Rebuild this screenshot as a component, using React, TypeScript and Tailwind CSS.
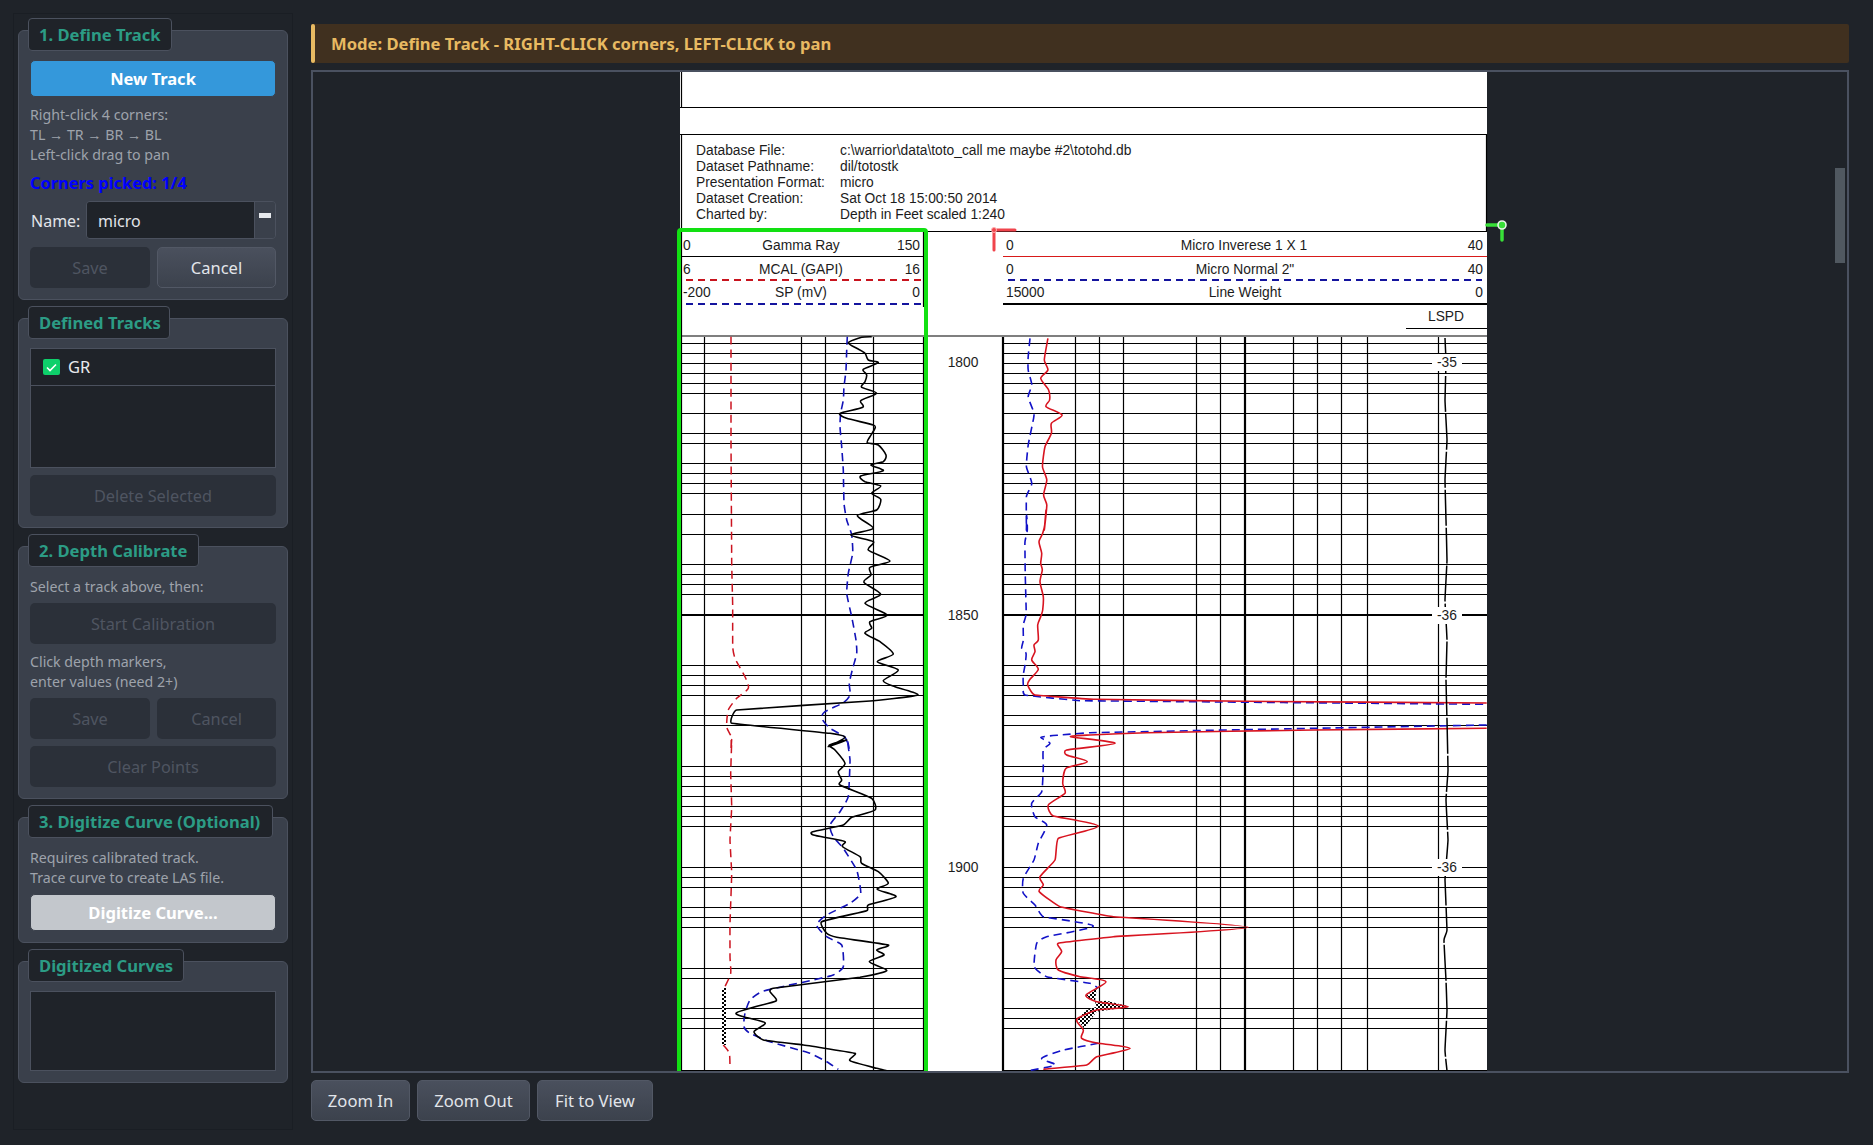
import React from "react";

const UI = "font-['Noto_Sans','Open_Sans',sans-serif]";

const pts = (ox: number, oy: number, sx: number, sy: number, a: number[][]) =>
  a.map(([x, y]) => `${(ox + x / sx).toFixed(1)},${(oy + y / sy).toFixed(1)}`).join(" ");

const Z6 = (a: number[][]) => pts(670, 330, 3, 3, a);
const Z7 = (a: number[][]) => pts(670, 740, 3, 3, a);
const Z5 = (a: number[][]) => pts(980, 200, 2.8, 3, a);
const Z8 = (a: number[][]) => pts(980, 660, 3, 3, a);
const Z11 = (a: number[][]) => pts(990, 510, 3, 3, a);

// Catmull-Rom through the traced points, with short handles so spikes do not overshoot
const clamp = (dx: number, dy: number, max: number) => {
  const l = Math.hypot(dx, dy);
  return l > max ? [(dx / l) * max, (dy / l) * max] : [dx, dy];
};
const smooth = (s: string) => {
  const p = s.trim().split(/\s+/).map((q) => q.split(",").map(Number));
  let d = `M${p[0][0]} ${p[0][1]}`;
  const k = 1 / 8;
  for (let i = 0; i < p.length - 1; i++) {
    const a = p[Math.max(i - 1, 0)], b = p[i], c = p[i + 1], e = p[Math.min(i + 2, p.length - 1)];
    const [d1x, d1y] = clamp((c[0] - a[0]) * k, (c[1] - a[1]) * k, 3);
    const [d2x, d2y] = clamp((e[0] - b[0]) * k, (e[1] - b[1]) * k, 3);
    d += `C${(b[0] + d1x).toFixed(1)} ${(b[1] + d1y).toFixed(1)} ${(c[0] - d2x).toFixed(1)} ${(c[1] - d2y).toFixed(1)} ${c[0]} ${c[1]}`;
  }
  return d;
};

const HL = [343,353,363,373,383,393,413,433,443,463,473,483,493,514,534,564,574,584,594,665,675,685,695,715,725,766,776,786,796,806,816,826,867,877,887,907,917,927,968,978,1008,1018,1028,1070];
const V1 = [704, 801, 825, 873, 923];
const V2 = [1075, 1099, 1123, 1196, 1220, 1293, 1317, 1341, 1367, 1438];

const grBlack = Z6([[605,20],[575,22],[535,38],[560,55],[585,70],[595,90],[625,98],[580,118],[590,135],[585,155],[575,172],[620,190],[572,212],[578,232],[510,250],[530,265],[610,285],[615,295],[600,320],[592,338],[625,345],[648,375],[640,395],[602,405],[640,422],[572,438],[585,455],[632,468],[605,490],[632,508],[620,540],[562,557],[610,595],[542,615],[610,635],[595,660],[660,693],[600,712],[603,735],[582,757],[632,793],[585,820],[652,855],[600,875],[605,895],[585,910],[630,935],[670,972],[622,995],[685,1020],[640,1052],[675,1070],[743,1095],[600,1113],[200,1140],[185,1180],[480,1210],[525,1222],[475,1250]]) + " " +
  Z7([[530,0],[478,15],[495,30],[525,70],[505,95],[515,120],[510,135],[605,175],[615,210],[545,232],[520,255],[428,275],[430,285],[480,295],[525,305],[518,320],[570,350],[575,370],[625,395],[655,430],[622,448],[678,470],[595,495],[590,512],[455,545],[470,580],[500,592],[655,615],[620,630],[642,645],[598,665],[650,692],[570,712],[310,745],[300,755],[318,783],[198,820],[285,848],[252,875],[280,900],[400,915],[555,940],[540,962],[620,985],[650,992]]);

const grBlue = Z6([[532,20],[530,60],[528,120],[522,170],[520,210],[512,250],[510,290],[515,350],[520,420],[522,520],[530,570],[545,615],[548,670],[535,730],[530,790],[545,860],[558,930],[560,970],[548,1015],[538,1060],[540,1095],[520,1118],[465,1145],[455,1165],[480,1195],[525,1222],[537,1255]]) + " " +
  Z7([[532,0],[540,60],[535,170],[510,215],[480,255],[490,290],[520,325],[560,390],[572,460],[540,490],[470,525],[440,555],[470,590],[515,615],[520,680],[490,705],[420,722],[345,738],[275,755],[240,780],[225,820],[222,860],[240,880],[300,905],[420,940],[470,965],[505,988]]);

const grRed1 = Z6([[183,20],[183,200],[183,330],[185,700],[188,830],[188,950],[195,985],[225,1040],[235,1075],[200,1105],[175,1140],[170,1190],[183,1220],[183,1260]]) + " " +
  Z7([[185,0],[182,100],[185,200],[180,300],[185,400],[180,550],[180,650],[182,700],[165,740]]);
const grRed2 = Z7([[160,915],[178,940],[180,985]]);

const miRed = Z5([[190,415],[180,480],[190,510],[170,535],[192,570],[195,600],[185,620],[230,645],[200,670],[200,700],[182,740],[175,800],[187,840],[178,885],[187,915],[180,990]]) + " " +
  Z11([[168,0],[165,40],[158,70],[147,95],[155,130],[152,160],[157,180],[150,215],[160,260],[158,300],[152,320],[143,345],[145,390],[132,405],[135,425],[125,450],[145,478],[120,508]]) + " " +
  Z8([[143,75],[165,105],[345,118],[800,124],[1520,129]]);
const miRed2 = Z8([[1520,205],[1000,210],[500,218],[330,225],[272,230],[405,250],[260,270],[260,285],[322,305],[258,325],[248,370],[255,400],[205,435],[220,468],[355,498],[235,535],[225,600],[180,650],[190,675],[178,695],[240,740],[400,770],[805,802],[400,830],[235,850],[245,875],[228,900],[235,930],[300,950],[378,965],[318,1005],[350,1025],[445,1040],[350,1050],[290,1078],[310,1110],[305,1135],[355,1150],[450,1165],[350,1190],[320,1215],[190,1228]]);

const miBlue = Z5([[140,415],[135,470],[135,510],[145,555],[135,590],[150,635],[150,655],[135,735],[130,800],[145,850],[130,890],[130,990]]) + " " +
  Z11([[110,15],[112,60],[105,95],[105,130],[106,200],[108,280],[108,315],[100,345],[100,390],[95,415],[108,430],[106,460],[100,495]]) + " " +
  Z8([[130,75],[135,105],[300,122],[1520,133]]);
const miBlue2 = Z8([[1520,195],[1000,205],[330,218],[240,225],[183,232],[210,250],[190,270],[190,320],[185,395],[155,430],[165,470],[200,495],[175,550],[162,600],[130,655],[130,700],[165,735],[190,770],[340,798],[200,830],[170,850],[163,920],[200,950],[330,970],[355,985]]);
const miBlue3 = Z8([[355,1150],[250,1170],[185,1195],[225,1215],[145,1232]]);
const blob = Z8([[350,985],[318,1008],[345,1025],[380,1022],[450,1040],[350,1055],[312,1105],[290,1078],[320,1050],[350,1040],[345,1025]]);

const lspd = "1445,338 1446,362 1445,400 1447,440 1445,480 1446,520 1447,560 1445,600 1447,640 1446,680 1447,720 1448,770 1446,800 1448,840 1445,880 1447,930 1444,940 1446,980 1447,1010 1445,1050 1447,1071";

function Doc() {
  const t = { fontFamily: "'Liberation Sans', sans-serif", fontSize: 13.8, fill: "#1c1c1c" };
  return (
    <svg viewBox="680 72 807 999" className="block w-[807px] h-[999px] overflow-visible shrink-0">
      <defs>
        <pattern id="chk" width="4" height="4" patternUnits="userSpaceOnUse">
          <rect width="4" height="4" fill="#fff" />
          <rect width="2" height="2" fill="#000" />
          <rect x="2" y="2" width="2" height="2" fill="#000" />
        </pattern>
      </defs>
      <rect x="680" y="72" width="807" height="999" fill="#fff" />
      <g stroke="#000" strokeWidth="1.2" fill="none">
        <path d="M681.5 72V107M680 107.5H1487M680 134.5H1487M681.5 134V1071M1486.5 134V231M681 231.5H1487M681 336H1487" />
        <path d="M681 256.5H923M923.5 232V307" />
        {HL.map((y) => (
          <path key={y} d={`M681 ${y + 0.5}H923M1003 ${y + 0.5}H1487`} />
        ))}
        {V1.map((x) => (
          <path key={x} d={`M${x + 0.5} 337V1071`} />
        ))}
        {V2.map((x) => (
          <path key={x} d={`M${x + 0.5} 337V1071`} />
        ))}
        <path d="M681 615H923M1003 615H1487" strokeWidth="2.2" />
        <path d="M1003 337V1071M1245 337V1071M1003 304H1487" strokeWidth="2.2" />
        <path d="M1406 328.5H1487" />
      </g>
      <path d="M1003 256.5H1487" stroke="#d81a1a" strokeWidth="1.2" />
      <path d="M686 280H921" stroke="#c8141e" strokeWidth="2" strokeDasharray="7 5" />
      <path d="M686 304H921" stroke="#14149e" strokeWidth="2" strokeDasharray="7 5" />
      <path d="M1008 280H1482" stroke="#14149e" strokeWidth="2" strokeDasharray="7 5" />

      <path d={smooth(grRed1)} fill="none" stroke="#cc1420" strokeWidth="1.5" strokeDasharray="8 5" />
      <path d={smooth(grRed2)} fill="none" stroke="#cc1420" strokeWidth="1.5" strokeDasharray="8 5" />
      <rect x="722" y="988" width="4" height="57" fill="url(#chk)" />
      <path d={smooth(grBlue)} fill="none" stroke="#1212b8" strokeWidth="1.6" strokeDasharray="8 5" />
      <path d={smooth(grBlack)} fill="none" stroke="#000" strokeWidth="1.6" strokeLinejoin="round" />

      <path d={smooth(miBlue)} fill="none" stroke="#1212c8" strokeWidth="1.6" strokeDasharray="8 5" />
      <path d={smooth(miBlue2)} fill="none" stroke="#1212c8" strokeWidth="1.6" strokeDasharray="8 5" />
      <path d={smooth(miBlue3)} fill="none" stroke="#1212c8" strokeWidth="1.6" strokeDasharray="8 5" />
      <polygon points={blob} fill="url(#chk)" />
      <path d={smooth(miRed)} fill="none" stroke="#d81420" strokeWidth="1.6" strokeLinejoin="round" />
      <path d={smooth(miRed2)} fill="none" stroke="#d81420" strokeWidth="1.6" strokeLinejoin="round" />
      <path d={smooth(lspd)} fill="none" stroke="#000" strokeWidth="1.5" strokeDasharray="36 2" />

      <rect x="1432" y="354" width="30" height="17" fill="#fff" />
      <rect x="1432" y="607" width="30" height="17" fill="#fff" />
      <rect x="1432" y="859" width="30" height="17" fill="#fff" />

      <g style={t}>
        {[
          ["Database File:", "c:\\warrior\\data\\toto_call me maybe #2\\totohd.db", 155],
          ["Dataset Pathname:", "dil/totostk", 171],
          ["Presentation Format:", "micro", 187],
          ["Dataset Creation:", "Sat Oct 18 15:00:50 2014", 202.5],
          ["Charted by:", "Depth in Feet scaled 1:240", 218.5],
        ].map(([a, b, y]) => (
          <g key={a as string}>
            <text x="696" y={y as number}>{a}</text>
            <text x="840" y={y as number}>{b}</text>
          </g>
        ))}
        <text x="683" y="250">0</text>
        <text x="801" y="250" textAnchor="middle">Gamma Ray</text>
        <text x="920" y="250" textAnchor="end">150</text>
        <text x="683" y="274">6</text>
        <text x="801" y="274" textAnchor="middle">MCAL (GAPI)</text>
        <text x="920" y="274" textAnchor="end">16</text>
        <text x="683" y="297">-200</text>
        <text x="801" y="297" textAnchor="middle">SP (mV)</text>
        <text x="920" y="297" textAnchor="end">0</text>

        <text x="1006" y="250">0</text>
        <text x="1244" y="250" textAnchor="middle">Micro Inverese 1 X 1</text>
        <text x="1483" y="250" textAnchor="end">40</text>
        <text x="1006" y="274">0</text>
        <text x="1245" y="274" textAnchor="middle">Micro Normal 2"</text>
        <text x="1483" y="274" textAnchor="end">40</text>
        <text x="1006" y="297">15000</text>
        <text x="1245" y="297" textAnchor="middle">Line Weight</text>
        <text x="1483" y="297" textAnchor="end">0</text>
        <text x="1446" y="320.5" textAnchor="middle">LSPD</text>

        <text x="963" y="367" textAnchor="middle">1800</text>
        <text x="963" y="620" textAnchor="middle">1850</text>
        <text x="963" y="872" textAnchor="middle">1900</text>
        <text x="1447" y="367" textAnchor="middle">-35</text>
        <text x="1447" y="620" textAnchor="middle">-36</text>
        <text x="1447" y="872" textAnchor="middle">-36</text>
      </g>

      <rect x="679" y="230" width="247" height="860" rx="2" fill="none" stroke="#12e012" strokeWidth="4" />

      <g fill="none" stroke="#f0444c" strokeWidth="3" strokeLinecap="round">
        <path d="M994 232V250M997 230H1015" />
      </g>
      <circle cx="994" cy="230" r="2.5" fill="#f0444c" stroke="#ffb0b0" strokeWidth="1" />
      <g fill="none" stroke="#38e038" strokeWidth="3.5" strokeLinecap="round">
        <path d="M1487 225H1502V240" />
      </g>
      <circle cx="1502" cy="225" r="4" fill="#38e038" stroke="#e8f4e8" strokeWidth="1.6" />
    </svg>
  );
}

function Group({ title, titleW, className, children }: { title: string; titleW: string; className: string; children: React.ReactNode }) {
  return (
    <section className={`relative border border-[#4b515e] bg-[#3a404b] rounded-[6px] px-[11px] ${className}`}>
      <h2 className={`absolute left-[9px] top-[-13px] h-[33px] ${titleW} bg-[#1f2329] border border-[#4b515e] rounded-[4px] flex items-center pl-[10px] pt-[2px] text-[16.6px] leading-none font-bold text-[#2c9c85] whitespace-nowrap`}>
        {title}
      </h2>
      {children}
    </section>
  );
}

function Disabled({ children, className = "" }: { children: React.ReactNode; className?: string }) {
  return (
    <button className={`h-[41px] pt-[2px] rounded-[5px] bg-[#2b3039] text-[#4f5561] text-[16.3px] flex items-center justify-center ${className}`}>
      {children}
    </button>
  );
}

function Hint({ children, className = "" }: { children: React.ReactNode; className?: string }) {
  return <p className={`text-[14.2px] leading-[20px] text-[#9ea3ab] ${className}`}>{children}</p>;
}

function ZoomBtn({ children, w }: { children: React.ReactNode; w: string }) {
  return (
    <button className={`h-[41px] pt-[2px] ${w} rounded-[5px] border border-[#525865] bg-linear-to-b from-[#4a505d] to-[#3c424d] text-[#e2e5ea] text-[16.6px] flex items-center justify-center`}>
      {children}
    </button>
  );
}

export default function App() {
  return (
    <div className={`${UI} h-[1145px] w-[1873px] overflow-hidden bg-[#1f2329] flex`}>
      <aside className="ml-[13px] mt-[13px] h-[1117px] w-[280px] shrink-0 border border-[#1a1e24] pl-[4px] pr-[4px] pt-[16px] flex flex-col">
        <Group title="1. Define Track" titleW="w-[144px]" className="h-[270px] shrink-0 pt-[29px] flex flex-col">
          <button className="h-[37px] pt-[2px] shrink-0 border border-[#3a404b] rounded-[5px] bg-[#3498db] text-white font-bold text-[16.5px]">New Track</button>
          <Hint className="mt-[8px]">
            Right-click 4 corners:
            <br />
            TL → TR → BR → BL
            <br />
            Left-click drag to pan
          </Hint>
          <p className="mt-[8px] text-[16.4px] leading-[20px] font-bold text-[#0000ff]">Corners picked: 1/4</p>
          <div className="mt-[8px] h-[38px] flex items-center">
            <span className="w-[56px] text-[16px] text-[#e2e5ea] pl-[1px] pt-[1px]">Name:</span>
            <div className="flex-1 h-full flex border border-[#4b515e] rounded-[4px] overflow-hidden">
              <input readOnly value="micro" className="w-[167px] bg-[#1f2329] pl-[11px] pt-[2px] text-[16px] text-[#e2e5ea] outline-none" />
              <span className="flex-1 bg-[#3a404b] border-l border-[#4b515e] pt-[11px] px-[4px]">
                <span className="block h-[5px] bg-[#e6e8ec]" />
              </span>
            </div>
          </div>
          <div className="mt-[8px] flex gap-[7px]">
            <Disabled className="w-[120px]">Save</Disabled>
            <button className="flex-1 h-[41px] pt-[2px] rounded-[5px] border border-[#525865] bg-linear-to-b from-[#4a505d] to-[#3c424d] text-[#e2e5ea] text-[16.5px]">Cancel</button>
          </div>
        </Group>

        <Group title="Defined Tracks" titleW="w-[142px]" className="mt-[18px] h-[210px] shrink-0 pt-[29px] flex flex-col">
          <div className="h-[120px] border border-[#4b515e] bg-[#1f2329]">
            <div className="h-[37px] border-b border-[#4b515e] flex items-center pl-[12px]">
              <span className="w-[17px] h-[16px] rounded-[2px] bg-[#0ed06b] flex items-center justify-center">
                <svg width="11" height="9" viewBox="0 0 11 9" fill="none"><path d="M1 4.5L4 7.5L10 1.5" stroke="#fff" strokeWidth="1.6" /></svg>
              </span>
              <span className="ml-[8px] text-[16.5px] text-[#e8eaee]">GR</span>
            </div>
          </div>
          <Disabled className="mt-[7px]">Delete Selected</Disabled>
        </Group>

        <Group title="2. Depth Calibrate" titleW="w-[171px]" className="mt-[18px] h-[253px] shrink-0 pt-[30px] flex flex-col">
          <Hint>Select a track above, then:</Hint>
          <Disabled className="mt-[6px]">Start Calibration</Disabled>
          <Hint className="mt-[8px]">
            Click depth markers,
            <br />
            enter values (need 2+)
          </Hint>
          <div className="mt-[6px] flex gap-[7px]">
            <Disabled className="w-[120px]">Save</Disabled>
            <Disabled className="flex-1">Cancel</Disabled>
          </div>
          <Disabled className="mt-[7px]">Clear Points</Disabled>
        </Group>

        <Group title="3. Digitize Curve (Optional)" titleW="w-[245px]" className="mt-[18px] h-[126px] shrink-0 pt-[30px] flex flex-col">
          <Hint>
            Requires calibrated track.
            <br />
            Trace curve to create LAS file.
          </Hint>
          <button className="mt-[6px] h-[37px] pt-[2px] shrink-0 border border-[#3a404b] rounded-[5px] bg-[#c3c7cc] text-white font-bold text-[16.6px]">Digitize Curve...</button>
        </Group>

        <Group title="Digitized Curves" titleW="w-[156px]" className="mt-[18px] h-[122px] shrink-0 pt-[29px]">
          <div className="h-[80px] border border-[#4b515e] bg-[#1f2329]" />
        </Group>
      </aside>

      <main className="ml-[18px] mt-[24px] w-[1538px] shrink-0 flex flex-col">
        <div className="h-[39px] pt-[2px] shrink-0 relative bg-[#40301f] rounded-[2px] flex items-center pl-[20px]">
          <span className="absolute left-0 top-0 bottom-0 w-[4px] rounded-[2px] bg-[#e8ba62]" />
          <span className="text-[16.6px] font-bold text-[#e8ba62]">Mode: Define Track - RIGHT-CLICK corners, LEFT-CLICK to pan</span>
        </div>
        <div className="mt-[7px] h-[1003px] shrink-0 relative border-2 border-[#4a5160] overflow-hidden pl-[367px]">
          <Doc />
          <div className="absolute right-[2px] top-[96px] w-[10px] h-[95px] bg-[#505860]" />
        </div>
        <div className="mt-[7px] flex gap-[7px]">
          <ZoomBtn w="w-[99px]">Zoom In</ZoomBtn>
          <ZoomBtn w="w-[113px]">Zoom Out</ZoomBtn>
          <ZoomBtn w="w-[116px]">Fit to View</ZoomBtn>
        </div>
      </main>
    </div>
  );
}
